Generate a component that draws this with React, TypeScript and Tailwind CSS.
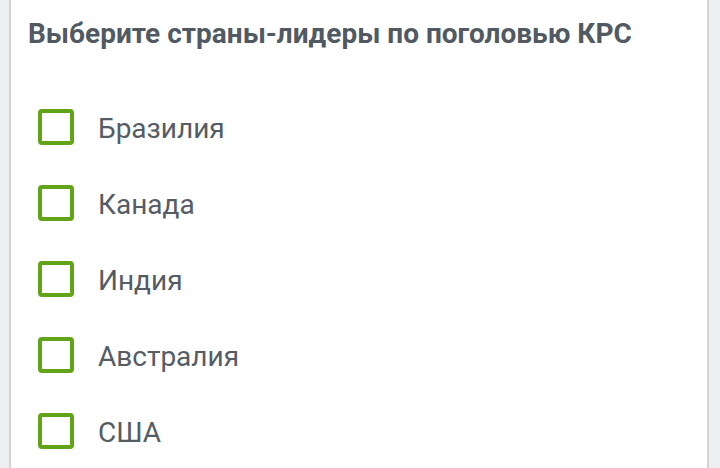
const items = ["Бразилия", "Канада", "Индия", "Австралия", "США"];

function Box() {
  return (
    <span className="block h-[36px] w-[36px] shrink-0 rounded-[4px] border-[4px] border-[#62a417] bg-white" />
  );
}

export default function App() {
  return (
    <div
      className="flex h-[468px] w-[720px] bg-[#eceeef]"
      style={{ fontFamily: "Roboto, 'Noto Sans', sans-serif" }}
    >
      <div className="ml-[9px] mr-[11px] flex flex-1 flex-col border-x-2 border-[#d2d4d5] bg-white pl-[17px]">
        <h1 className="mt-[18px] text-[28px] font-bold leading-[32px] text-[#515a62]">
          Выберите страны-лидеры по поголовью КРС
        </h1>
        <ul className="mt-[59px] flex flex-col gap-[40px] pl-[10px]">
          {items.map((name) => (
            <li key={name} className="flex h-[36px] items-center gap-[24px]">
              <Box />
              <span className="pt-[4px] text-[28px] leading-[32px] text-[#545c64]">{name}</span>
            </li>
          ))}
        </ul>
      </div>
    </div>
  );
}
